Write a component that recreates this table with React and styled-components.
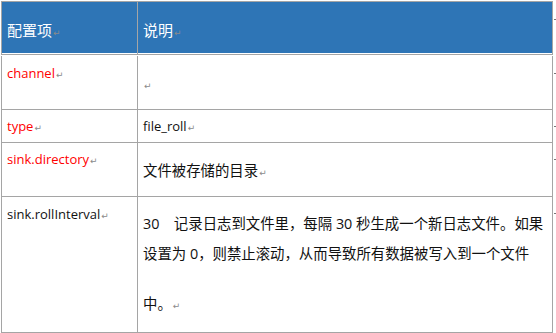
import React from "react";
import styled, { createGlobalStyle } from "styled-components";

const Global = createGlobalStyle`
  html, body { margin: 0; padding: 0; background: #fff; }
  body { font-family: "Open Sans", "Noto Sans CJK SC", sans-serif; }
`;

const Page = styled.div`
  padding: 1px 0 0 1px;
`;

const Table = styled.div`
  display: grid;
  grid-template-columns: 137px 415px 3px;
  width: 555px;
`;

const Cell = styled.div`
  box-sizing: border-box;
  height: ${(p) => p.$h}px;
  border-right: 1px solid #a5a5a5;
  border-bottom: 1px solid #a5a5a5;
  ${(p) => (p.$first ? "border-left: 1px solid #a5a5a5;" : "")}
  ${(p) => (p.$top ? "border-top: 1px solid #a5a5a5;" : "")}
  padding: ${(p) => p.$pt || 0}px 0 0 5px;
  font-size: 13px;
  line-height: 18px;
  color: #111;
  white-space: nowrap;
`;

const HeadCell = styled(Cell)`
  background: #2e75b6;
  color: #fff;
  font-family: "Noto Sans CJK SC", sans-serif;
  font-size: 15px;
  line-height: 22px;
  box-shadow: inset 0 -1px 0 #fff;
`;

const Key = styled.span`
  color: ${(p) => (p.$red ? "#ff0000" : "#111")};
`;

const Para = styled.p`
  margin: 0;
  font-size: 14.4px;
  line-height: 18px;
`;

const Line = styled.div`
  font-size: 14.4px;
  line-height: 18px;
  margin-top: ${(p) => p.$gap || 0}px;
`;

const Mark = styled.span`
  color: #8a8a8a;
  font-family: "DejaVu Sans", sans-serif;
  font-size: 9px;
  margin-left: 1px;
`;

const EndCell = styled.div`
  height: ${(p) => p.$h}px;
  ${(p) => (p.$top ? "margin-top: 1px;" : "")}
  box-sizing: border-box;
  padding-top: ${(p) => p.$pt}px;
`;

const EndTick = styled.div`
  width: 2px;
  height: 1px;
  margin-left: 1px;
  background: #777;
`;

const M = () => <Mark>↵</Mark>;

export default function App() {
  return (
    <Page>
      <Global />
      <Table>
        <HeadCell $h={54} $first $top $pt={17}>
          配置项<M />
        </HeadCell>
        <HeadCell $h={54} $top $pt={17}>
          说明<M />
        </HeadCell>
        <EndCell $h={54} $top $pt={17}><EndTick /></EndCell>

        <Cell $h={54} $first $pt={8}>
          <Key $red>channel</Key><M />
        </Cell>
        <Cell $h={54} $pt={19}>
          <M />
        </Cell>
        <EndCell $h={54} $pt={17}><EndTick /></EndCell>

        <Cell $h={33} $first $pt={7}>
          <Key $red>type</Key><M />
        </Cell>
        <Cell $h={33} $pt={7}>
          file_roll<M />
        </Cell>
        <EndCell $h={33} $pt={16}><EndTick /></EndCell>

        <Cell $h={54} $first $pt={7}>
          <Key $red>sink.directory</Key><M />
        </Cell>
        <Cell $h={54} $pt={19}>
          <Para>文件被存储的目录<M /></Para>
        </Cell>
        <EndCell $h={54} $pt={16}><EndTick /></EndCell>

        <Cell $h={136} $first $pt={8}>
          <Key>sink.rollInterval</Key><M />
        </Cell>
        <Cell $h={136} $pt={18}>
          <Line>30　记录日志到文件里，每隔 30 秒生成一个新日志文件。如果</Line>
          <Line $gap={12}>设置为 0，则禁止滚动，从而导致所有数据被写入到一个文件</Line>
          <Line $gap={32}>中。<M /></Line>
        </Cell>
        <EndCell $h={136} $pt={16}><EndTick /></EndCell>
      </Table>
    </Page>
  );
}
